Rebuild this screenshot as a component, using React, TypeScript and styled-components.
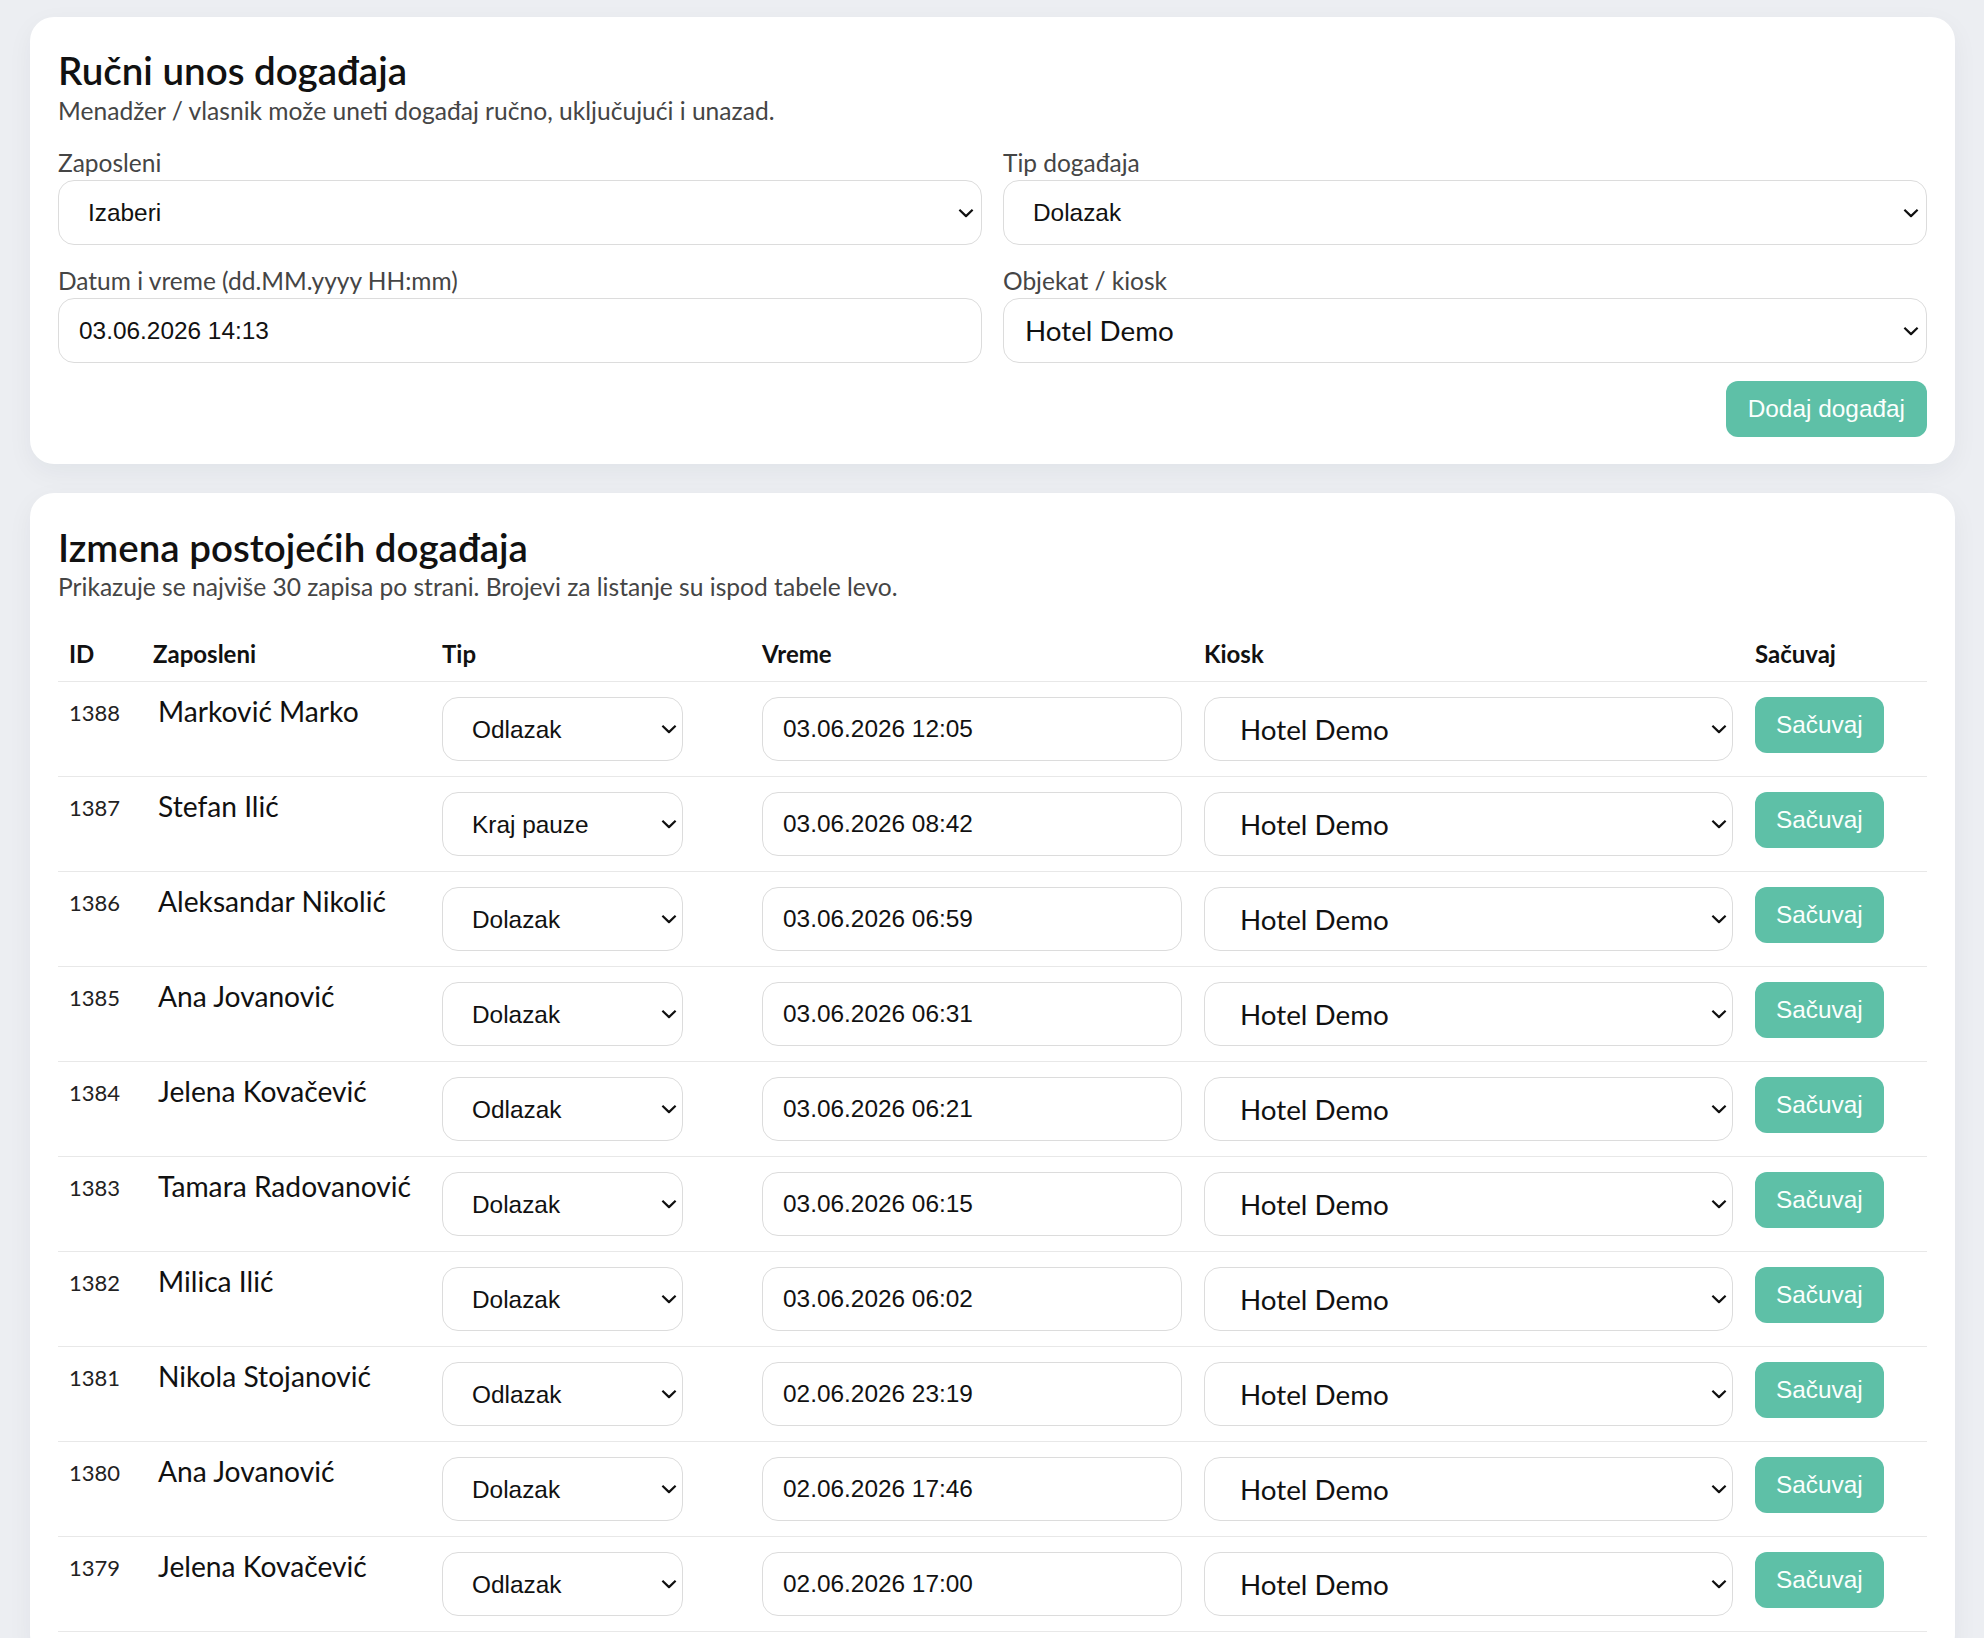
import React from 'react';
import styled, { createGlobalStyle } from 'styled-components';

const GlobalStyle = createGlobalStyle`
  html, body {
    margin: 0;
    padding: 0;
    background: #eceef2;
  }
  body {
    font-family: 'Lato', 'Noto Sans', sans-serif;
    color: #111;
  }
  * {
    box-sizing: border-box;
  }
`;

const Page = styled.main`
  padding: 17px 29px 0 30px;
  display: flex;
  flex-direction: column;
  gap: 29px;
`;

const Card = styled.section<{ $top: number }>`
  background: #fff;
  border-radius: 24px;
  padding: ${(p) => p.$top}px 28px 27px;
  box-shadow: 0 8px 26px rgba(20, 30, 60, 0.05);
`;

const Title = styled.h2`
  margin: 0;
  font-size: 38.5px;
  line-height: 45px;
  font-weight: 600;
  color: #111;
`;

const Subtitle = styled.p<{ $gap: number }>`
  margin: ${(p) => p.$gap}px 0 0;
  font-size: 24.6px;
  line-height: 30px;
  color: #454545;
`;

const FormGrid = styled.div`
  margin-top: 22px;
  display: grid;
  grid-template-columns: 1fr 1fr;
  column-gap: 21px;
  row-gap: 21px;
`;

const Field = styled.label`
  display: flex;
  flex-direction: column;
  gap: 2px;
`;

const FieldLabel = styled.span`
  font-size: 24.5px;
  line-height: 30px;
  color: #454545;
`;

const SelectWrap = styled.div<{ $width?: number }>`
  position: relative;
  width: ${(p) => (p.$width ? `${p.$width}px` : '100%')};
`;

const Select = styled.select<{ $pad: number; $ui?: boolean; $h: number }>`
  appearance: none;
  -webkit-appearance: none;
  display: block;
  width: 100%;
  height: ${(p) => p.$h}px;
  margin: 0;
  padding: 0 34px 0 ${(p) => p.$pad}px;
  border: 1px solid #dcdcdc;
  border-radius: 16px;
  background: #fff;
  color: #111;
  font-family: ${(p) =>
    p.$ui ? "'Lato', 'Noto Sans', sans-serif" : "'Liberation Sans', Arial, sans-serif"};
  font-size: ${(p) => (p.$ui ? '27.8px' : '24.4px')};
  outline: none;
`;

const Chevron = styled.svg<{ $right: number }>`
  position: absolute;
  right: ${(p) => p.$right}px;
  top: 50%;
  transform: translateY(-50%);
  pointer-events: none;
`;

const TextInput = styled.input<{ $h: number }>`
  display: block;
  width: 100%;
  height: ${(p) => p.$h}px;
  margin: 0;
  padding: 0 20px;
  border: 1px solid #dcdcdc;
  border-radius: 16px;
  background: #fff;
  color: #111;
  font-family: 'Liberation Sans', Arial, sans-serif;
  font-size: 24.4px;
  outline: none;
`;

const Actions = styled.div`
  margin-top: 18px;
  display: flex;
  justify-content: flex-end;
`;

const PrimaryButton = styled.button`
  height: 56px;
  padding: 0 22px;
  border: none;
  border-radius: 12px;
  background: #5ec0a7;
  color: #fbfffd;
  font-family: 'Liberation Sans', Arial, sans-serif;
  font-size: 24.4px;
  line-height: 28px;
  cursor: pointer;
`;

const Table = styled.table`
  margin-top: 26px;
  width: 100%;
  table-layout: fixed;
  border-collapse: separate;
  border-spacing: 0;
`;

const HeadCell = styled.th`
  text-align: left;
  padding: 12px 11px 14px;
  font-size: 24px;
  line-height: 27px;
  font-weight: 700;
  color: #111;
  border-bottom: 1px solid #e8e8e8;
`;

const Cell = styled.td<{ $padTop?: number; $padLeft?: number }>`
  vertical-align: top;
  padding: ${(p) => p.$padTop ?? 15}px 11px 15px ${(p) => p.$padLeft ?? 11}px;
  border-bottom: 1px solid #e8e8e8;
`;

const IdText = styled.span`
  font-size: 22px;
  line-height: 28px;
  color: #222;
`;

const NameText = styled.span`
  font-size: 28.2px;
  line-height: 28px;
  color: #111;
`;

const SaveButton = styled(PrimaryButton)`
  padding: 0 21px;
`;

const ChevronDown = ({ right }: { right: number }) => (
  <Chevron $right={right} width="16" height="9" viewBox="0 0 16 9">
    <path d="M1.4 1.2 L8 7.6 L14.6 1.2" fill="none" stroke="#111" strokeWidth="2.2" />
  </Chevron>
);

const eventTypes = ['Dolazak', 'Odlazak', 'Početak pauze', 'Kraj pauze'];

type EventRow = { id: number; name: string; type: string; time: string };

const rows: EventRow[] = [
  { id: 1388, name: 'Marković Marko', type: 'Odlazak', time: '03.06.2026 12:05' },
  { id: 1387, name: 'Stefan Ilić', type: 'Kraj pauze', time: '03.06.2026 08:42' },
  { id: 1386, name: 'Aleksandar Nikolić', type: 'Dolazak', time: '03.06.2026 06:59' },
  { id: 1385, name: 'Ana Jovanović', type: 'Dolazak', time: '03.06.2026 06:31' },
  { id: 1384, name: 'Jelena Kovačević', type: 'Odlazak', time: '03.06.2026 06:21' },
  { id: 1383, name: 'Tamara Radovanović', type: 'Dolazak', time: '03.06.2026 06:15' },
  { id: 1382, name: 'Milica Ilić', type: 'Dolazak', time: '03.06.2026 06:02' },
  { id: 1381, name: 'Nikola Stojanović', type: 'Odlazak', time: '02.06.2026 23:19' },
  { id: 1380, name: 'Ana Jovanović', type: 'Dolazak', time: '02.06.2026 17:46' },
  { id: 1379, name: 'Jelena Kovačević', type: 'Odlazak', time: '02.06.2026 17:00' },
];

const ManualEntry = () => (
  <Card $top={31}>
    <Title>Ručni unos događaja</Title>
    <Subtitle $gap={3}>Menadžer / vlasnik može uneti događaj ručno, uključujući i unazad.</Subtitle>
    <FormGrid>
      <Field>
        <FieldLabel>Zaposleni</FieldLabel>
        <SelectWrap>
          <Select $pad={29} $h={65} defaultValue="">
            <option value="">Izaberi</option>
            {rows.map((r) => (
              <option key={r.id} value={r.name}>
                {r.name}
              </option>
            ))}
          </Select>
          <ChevronDown right={8} />
        </SelectWrap>
      </Field>
      <Field>
        <FieldLabel>Tip događaja</FieldLabel>
        <SelectWrap>
          <Select $pad={29} $h={65} defaultValue="Dolazak">
            {eventTypes.map((t) => (
              <option key={t}>{t}</option>
            ))}
          </Select>
          <ChevronDown right={8} />
        </SelectWrap>
      </Field>
      <Field>
        <FieldLabel>Datum i vreme (dd.MM.yyyy HH:mm)</FieldLabel>
        <TextInput $h={65} defaultValue="03.06.2026 14:13" />
      </Field>
      <Field>
        <FieldLabel>Objekat / kiosk</FieldLabel>
        <SelectWrap>
          <Select $pad={21} $h={65} $ui defaultValue="Hotel Demo">
            <option>Hotel Demo</option>
          </Select>
          <ChevronDown right={8} />
        </SelectWrap>
      </Field>
    </FormGrid>
    <Actions>
      <PrimaryButton>Dodaj događaj</PrimaryButton>
    </Actions>
  </Card>
);

const ExistingEvents = () => (
  <Card $top={32}>
    <Title>Izmena postojećih događaja</Title>
    <Subtitle $gap={2}>
      Prikazuje se najviše 30 zapisa po strani. Brojevi za listanje su ispod tabele levo.
    </Subtitle>
    <Table>
      <colgroup>
        <col style={{ width: 84 }} />
        <col style={{ width: 289 }} />
        <col style={{ width: 320 }} />
        <col style={{ width: 442 }} />
        <col style={{ width: 551 }} />
        <col />
      </colgroup>
      <thead>
        <tr>
          <HeadCell>ID</HeadCell>
          <HeadCell>Zaposleni</HeadCell>
          <HeadCell>Tip</HeadCell>
          <HeadCell>Vreme</HeadCell>
          <HeadCell>Kiosk</HeadCell>
          <HeadCell>Sačuvaj</HeadCell>
        </tr>
      </thead>
      <tbody>
        {rows.map((r) => (
          <tr key={r.id}>
            <Cell $padTop={17}>
              <IdText>{r.id}</IdText>
            </Cell>
            <Cell $padLeft={16}>
              <NameText>{r.name}</NameText>
            </Cell>
            <Cell>
              <SelectWrap $width={241}>
                <Select $pad={29} $h={64} defaultValue={r.type}>
                  {eventTypes.map((t) => (
                    <option key={t}>{t}</option>
                  ))}
                </Select>
                <ChevronDown right={6} />
              </SelectWrap>
            </Cell>
            <Cell>
              <TextInput $h={64} defaultValue={r.time} />
            </Cell>
            <Cell>
              <SelectWrap>
                <Select $pad={35} $h={64} $ui defaultValue="Hotel Demo">
                  <option>Hotel Demo</option>
                </Select>
                <ChevronDown right={6} />
              </SelectWrap>
            </Cell>
            <Cell>
              <SaveButton>Sačuvaj</SaveButton>
            </Cell>
          </tr>
        ))}
      </tbody>
    </Table>
  </Card>
);

export default function App() {
  return (
    <>
      <GlobalStyle />
      <Page>
        <ManualEntry />
        <ExistingEvents />
      </Page>
    </>
  );
}
